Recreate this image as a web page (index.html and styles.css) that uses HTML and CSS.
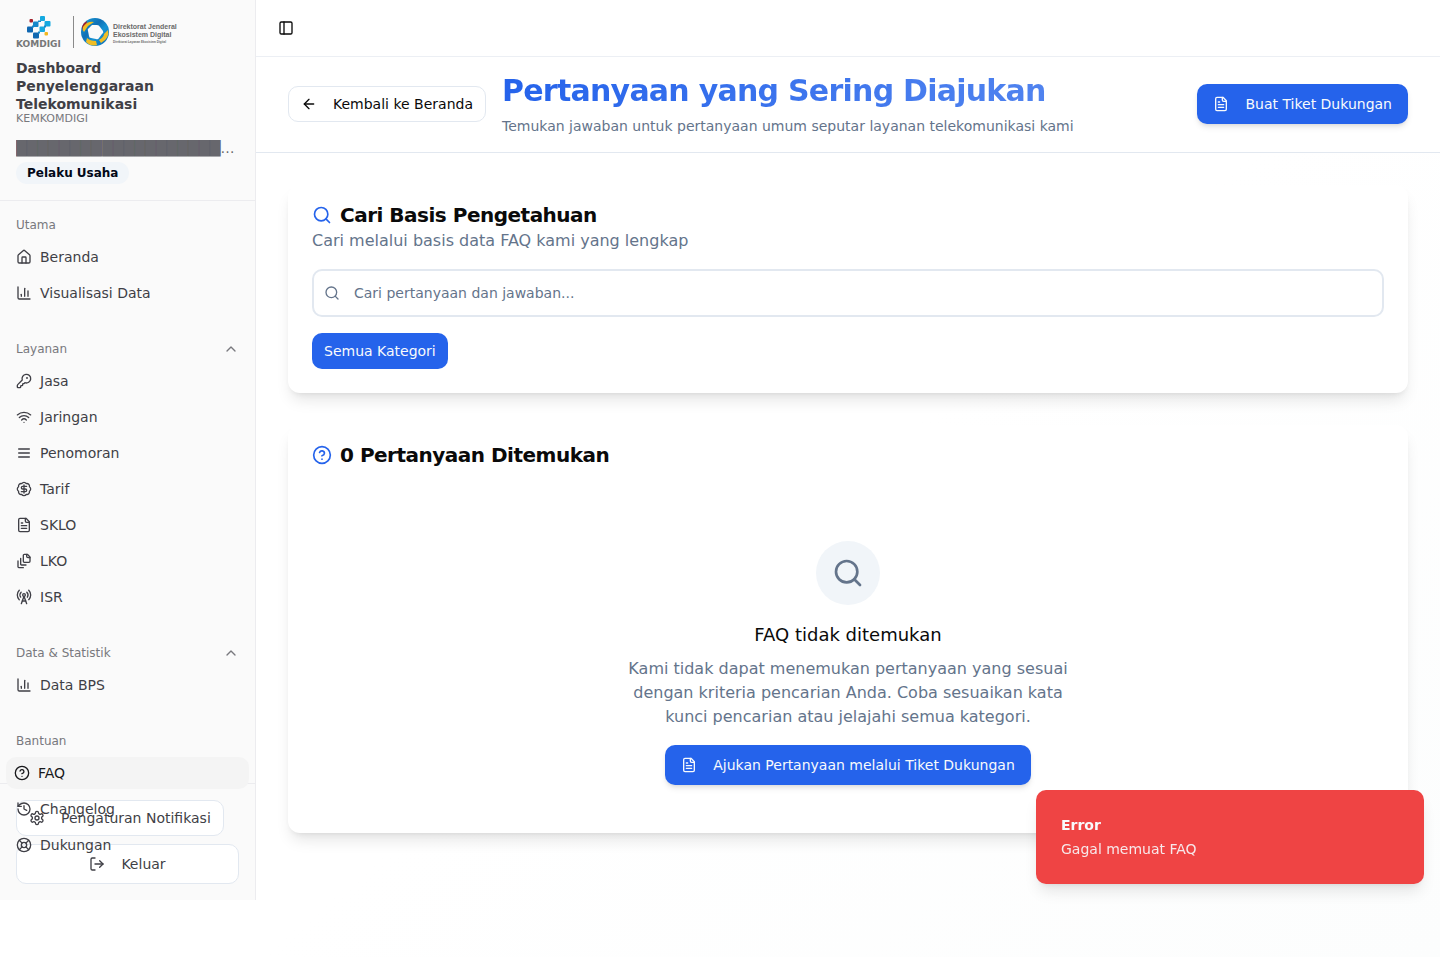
FILE: index.html
```html
<!DOCTYPE html>
<html lang="id">
<head>
  <meta charset="UTF-8" />
  <meta name="viewport" content="width=device-width, initial-scale=1.0"/>
  <title>Pertanyaan yang Sering Diajukan</title>
  <link rel="stylesheet" href="styles.css">
</head>
<body>
  <svg class="sprite" aria-hidden="true">
    <symbol id="search" viewBox="0 0 24 24"><circle cx="11" cy="11" r="8"/><path d="m21 21-4.3-4.3"/></symbol>
    <symbol id="chart" viewBox="0 0 24 24"><path d="M3 3v16a2 2 0 0 0 2 2h16"/><path d="M18 17V9"/><path d="M13 17V5"/><path d="M8 17v-3"/></symbol>
    <symbol id="file-text" viewBox="0 0 24 24"><path d="M15 2H6a2 2 0 0 0-2 2v16a2 2 0 0 0 2 2h12a2 2 0 0 0 2-2V7Z"/><path d="M14 2v4a2 2 0 0 0 2 2h4"/><path d="M10 9H8"/><path d="M16 13H8"/><path d="M16 17H8"/></symbol>
    <symbol id="help" viewBox="0 0 24 24"><circle cx="12" cy="12" r="10"/><path d="M9.09 9a3 3 0 0 1 5.83 1c0 2-3 3-3 3"/><path d="M12 17h.01"/></symbol>
    <symbol id="chevron-up" viewBox="0 0 24 24"><path d="m18 15-6-6-6 6"/></symbol>
  </svg>

  <div class="layout">
    <aside class="sidebar">
      <div class="sidebar-header">
        <svg class="logo" width="162" height="32" viewBox="0 0 162 32" role="img" aria-label="Komdigi, Direktorat Jenderal Ekosistem Digital">
          <rect x="13.500" y="3" width="3.500" height="3.500" rx="1" fill="#a31f2b"/>
          <rect x="24" y="0" width="5" height="5" rx="1" fill="#14a9e0"/>
          <rect x="17" y="5.500" width="5.500" height="5.500" rx="1" fill="#1687c9"/>
          <rect x="28.500" y="5" width="6" height="5.500" rx="1" fill="#14a9e0"/>
          <rect x="11" y="10.500" width="6" height="6" rx="1" fill="#0f67b1"/>
          <rect x="23.500" y="10.500" width="5.500" height="5.500" rx="1" fill="#14a9e0"/>
          <rect x="17" y="16.500" width="6" height="6" rx="1" fill="#0f67b1"/>
          <rect x="28.500" y="16" width="3.500" height="3.500" rx="1" fill="#f2b71f"/>
          <path d="M22 4.500h3v1.500h-3zM28 9.500h2v2h-2zM16 9.500h2v2h-2zM22 15.500h2v2h-2z" fill="#1687c9"/>
          <text x="0" y="31" class="logo-name">KOMDIGI</text>
          <path d="M57.500 0v32" stroke="#8a8a8a" fill="none"/>
          <linearGradient id="ring" x1="0" y1="0" x2="1" y2="1">
            <stop offset="0" stop-color="#1ba4de"/>
            <stop offset=".4" stop-color="#0f6fb5"/>
            <stop offset=".6" stop-color="#1593d3"/>
            <stop offset="1" stop-color="#0f67b1"/>
          </linearGradient>
          <circle cx="79" cy="16" r="14" fill="url(#ring)"/>
          <path d="M66 11q1-4 5-6l-1 5-3 5z" fill="#a31f2b"/>
          <path d="M67 11q4-6 11-5l-6 4-4 6q-2-2-1-5z" fill="#f0bd24"/>
          <path d="M92 14q2 8-7 13l-2-3q5-3 5-6z" fill="#f0bd24"/>
          <path d="M71 22q3 3 9 3l1 4q-6 2-11-3z" fill="#f0bd24"/>
          <path d="M76 9h5q2 0 3 2l3 4q1 2-1 3l-3 4q-1 2-3 1l-5-1q-2 0-2-2l-1-5q-1-2 1-3z" fill="#fafafa"/>
          <text x="97" y="13" class="logo-unit">Direktorat Jenderal</text>
          <text x="97" y="21" class="logo-unit">Ekosistem Digital</text>
          <text x="97" y="27" class="logo-small">Direktorat Layanan Ekosistem Digital</text>
        </svg>
        <div class="app-title">Dashboard Penyelenggaraan Telekomunikasi</div>
        <div class="app-org">KEMKOMDIGI</div>
        <div class="user-name">██████████████████████████</div>
        <span class="badge">Pelaku Usaha</span>
      </div>

      <nav class="sidebar-nav">
        <div class="group">
          <div class="group-label">Utama</div>
          <a href="#" class="item"><svg class="icon" viewBox="0 0 24 24"><path d="M15 21v-8a1 1 0 0 0-1-1h-4a1 1 0 0 0-1 1v8"/><path d="M3 10a2 2 0 0 1 .709-1.528l7-5.999a2 2 0 0 1 2.582 0l7 5.999A2 2 0 0 1 21 10v9a2 2 0 0 1-2 2H5a2 2 0 0 1-2-2z"/></svg>Beranda</a>
          <a href="#" class="item"><svg class="icon"><use href="#chart"/></svg>Visualisasi Data</a>
        </div>

        <div class="group">
          <button class="group-label">Layanan<svg class="icon"><use href="#chevron-up"/></svg></button>
          <a href="#" class="item"><svg class="icon" viewBox="0 0 24 24"><path d="M2.586 17.414A2 2 0 0 0 2 18.828V21a1 1 0 0 0 1 1h3a1 1 0 0 0 1-1v-1a1 1 0 0 1 1-1h1a1 1 0 0 0 1-1v-1a1 1 0 0 1 1-1h.172a2 2 0 0 0 1.414-.586l.814-.814a6.500 6.500 0 1 0-4-4z"/><circle cx="16.500" cy="7.500" r=".5" fill="currentColor"/></svg>Jasa</a>
          <a href="#" class="item"><svg class="icon" viewBox="0 0 24 24"><path d="M12 20h.01"/><path d="M2 8.820a15 15 0 0 1 20 0"/><path d="M5 12.859a10 10 0 0 1 14 0"/><path d="M8.500 16.429a5 5 0 0 1 7 0"/></svg>Jaringan</a>
          <a href="#" class="item"><svg class="icon" viewBox="0 0 24 24"><path d="M4 12h16"/><path d="M4 18h16"/><path d="M4 6h16"/></svg>Penomoran</a>
          <a href="#" class="item"><svg class="icon" viewBox="0 0 24 24"><path d="M3.850 8.620a4 4 0 0 1 4.780-4.770 4 4 0 0 1 6.740 0 4 4 0 0 1 4.780 4.780 4 4 0 0 1 0 6.740 4 4 0 0 1-4.770 4.780 4 4 0 0 1-6.750 0 4 4 0 0 1-4.780-4.770 4 4 0 0 1 0-6.760Z"/><path d="M16 8h-6a2 2 0 1 0 0 4h4a2 2 0 1 1 0 4H8"/><path d="M12 18V6"/></svg>Tarif</a>
          <a href="#" class="item"><svg class="icon"><use href="#file-text"/></svg>SKLO</a>
          <a href="#" class="item"><svg class="icon" viewBox="0 0 24 24"><path d="M21 7h-3a2 2 0 0 1-2-2V2"/><path d="M21 6v6.500c0 .8-.7 1.500-1.500 1.500h-7c-.8 0-1.500-.7-1.500-1.500v-9c0-.8.7-1.500 1.500-1.500H17Z"/><path d="M7 8v8.800c0 .3.2.6.4.8.2.2.5.4.8.4H15"/><path d="M3 12v8.800c0 .3.2.6.4.8.2.2.5.4.8.4H11"/></svg>LKO</a>
          <a href="#" class="item"><svg class="icon" viewBox="0 0 24 24"><path d="M4.900 16.100C1 12.200 1 5.800 4.900 1.900"/><path d="M7.800 4.700a6.140 6.140 0 0 0-.8 7.500"/><circle cx="12" cy="9" r="2"/><path d="M16.200 4.800c2 2 2.260 5.110.8 7.470"/><path d="M19.100 1.900a9.960 9.960 0 0 1 0 14.100"/><path d="M9.500 18h5"/><path d="m8 22 4-11 4 11"/></svg>ISR</a>
        </div>

        <div class="group">
          <button class="group-label">Data &amp; Statistik<svg class="icon"><use href="#chevron-up"/></svg></button>
          <a href="#" class="item"><svg class="icon"><use href="#chart"/></svg>Data BPS</a>
        </div>

        <div class="group">
          <div class="group-label">Bantuan</div>
          <a href="#" class="item active"><svg class="icon"><use href="#help"/></svg>FAQ</a>
          <a href="#" class="item"><svg class="icon" viewBox="0 0 24 24"><path d="M3 12a9 9 0 1 0 9-9 9.750 9.750 0 0 0-6.740 2.740L3 8"/><path d="M3 3v5h5"/><path d="M12 7v5l4 2"/></svg>Changelog</a>
          <a href="#" class="item"><svg class="icon" viewBox="0 0 24 24"><circle cx="12" cy="12" r="10"/><path d="m4.930 4.930 4.240 4.240"/><path d="m14.830 9.170 4.240-4.240"/><path d="m14.830 14.830 4.240 4.240"/><path d="m9.170 14.830-4.240 4.240"/><circle cx="12" cy="12" r="4"/></svg>Dukungan</a>
        </div>
      </nav>

      <div class="sidebar-footer">
        <button class="btn btn-outline btn-sm"><svg class="icon" viewBox="0 0 24 24"><path d="M12.220 2h-.44a2 2 0 0 0-2 2v.18a2 2 0 0 1-1 1.730l-.43.25a2 2 0 0 1-2 0l-.15-.08a2 2 0 0 0-2.730.73l-.22.38a2 2 0 0 0 .73 2.730l.15.1a2 2 0 0 1 1 1.720v.51a2 2 0 0 1-1 1.740l-.15.09a2 2 0 0 0-.73 2.730l.22.38a2 2 0 0 0 2.730.73l.15-.08a2 2 0 0 1 2 0l.43.25a2 2 0 0 1 1 1.730V20a2 2 0 0 0 2 2h.44a2 2 0 0 0 2-2v-.18a2 2 0 0 1 1-1.730l.43-.25a2 2 0 0 1 2 0l.15.08a2 2 0 0 0 2.730-.73l.22-.39a2 2 0 0 0-.73-2.730l-.15-.08a2 2 0 0 1-1-1.740v-.5a2 2 0 0 1 1-1.740l.15-.09a2 2 0 0 0 .73-2.730l-.22-.38a2 2 0 0 0-2.730-.73l-.15.08a2 2 0 0 1-2 0l-.43-.25a2 2 0 0 1-1-1.730V4a2 2 0 0 0-2-2z"/><circle cx="12" cy="12" r="3"/></svg>Pengaturan Notifikasi</button>
        <button class="btn btn-outline btn-full"><svg class="icon" viewBox="0 0 24 24"><path d="M9 21H5a2 2 0 0 1-2-2V5a2 2 0 0 1 2-2h4"/><path d="m16 17 5-5-5-5"/><path d="M21 12H9"/></svg>Keluar</button>
      </div>
    </aside>

    <main class="main">
      <div class="topbar">
        <button class="toggle" aria-label="Toggle Sidebar"><svg class="icon" viewBox="0 0 24 24"><rect width="18" height="18" x="3" y="3" rx="2"/><path d="M9 3v18"/></svg></button>
      </div>

      <header class="page-header">
        <button class="btn btn-outline btn-sm"><svg class="icon" viewBox="0 0 24 24"><path d="m12 19-7-7 7-7"/><path d="M19 12H5"/></svg>Kembali ke Beranda</button>
        <div class="page-heading">
          <h1>Pertanyaan yang Sering Diajukan</h1>
          <p>Temukan jawaban untuk pertanyaan umum seputar layanan telekomunikasi kami</p>
        </div>
        <button class="btn btn-primary"><svg class="icon"><use href="#file-text"/></svg>Buat Tiket Dukungan</button>
      </header>

      <div class="content">
        <section class="card">
          <div class="card-header">
            <h2><svg class="icon icon-md"><use href="#search"/></svg>Cari Basis Pengetahuan</h2>
            <p>Cari melalui basis data FAQ kami yang lengkap</p>
          </div>
          <div class="card-body">
            <label class="search-box">
              <svg class="icon"><use href="#search"/></svg>
              <input type="text" placeholder="Cari pertanyaan dan jawaban..." aria-label="Cari pertanyaan dan jawaban">
            </label>
            <button class="btn btn-category">Semua Kategori</button>
          </div>
        </section>

        <section class="card">
          <div class="card-header">
            <h2><svg class="icon icon-md"><use href="#help"/></svg>0 Pertanyaan Ditemukan</h2>
          </div>
          <div class="empty">
            <div class="empty-icon"><svg class="icon icon-lg"><use href="#search"/></svg></div>
            <h3>FAQ tidak ditemukan</h3>
            <p>Kami tidak dapat menemukan pertanyaan yang sesuai dengan kriteria pencarian Anda. Coba sesuaikan kata kunci pencarian atau jelajahi semua kategori.</p>
            <button class="btn btn-primary"><svg class="icon"><use href="#file-text"/></svg>Ajukan Pertanyaan melalui Tiket Dukungan</button>
          </div>
        </section>
      </div>
    </main>
  </div>

  <div class="toast" role="alert">
    <div class="toast-title">Error</div>
    <div class="toast-text">Gagal memuat FAQ</div>
  </div>
</body>
</html>
```
FILE: styles.css
```css
* {
  box-sizing: border-box;
}
body {
  margin: 0;
  font-family: "DejaVu Sans", sans-serif;
  font-size: 14px;
  line-height: 20px;
  color: #0a0a0a;
  background: #fff;
}
h1, h2, h3, p {
  margin: 0;
}
button, input {
  font: inherit;
  color: inherit;
}
.sprite {
  display: none;
}
.icon {
  width: 16px;
  height: 16px;
  flex-shrink: 0;
  fill: none;
  stroke: currentColor;
  stroke-width: 2;
  stroke-linecap: round;
  stroke-linejoin: round;
}
.icon-md {
  width: 20px;
  height: 20px;
}
.icon-lg {
  width: 32px;
  height: 32px;
}
.layout {
  display: flex;
  align-items: flex-start;
}

/* Sidebar */
.sidebar {
  width: 256px;
  flex-shrink: 0;
  background: #fafafa;
  border-right: 1px solid #ececef;
  color: #3f3f46;
}
.sidebar-header {
  padding: 16px;
  border-bottom: 1px solid #ececef;
}
.logo {
  display: block;
  margin-bottom: 11px;
  overflow: visible;
}
.logo-name {
  font: bold 9px "DejaVu Sans", sans-serif;
  fill: #777;
}
.logo-unit {
  font: bold 7px "Liberation Sans", sans-serif;
  fill: #6a6a6a;
}
.logo-small {
  font: bold 3px "Liberation Sans", sans-serif;
  fill: #6a6a6a;
}
.app-title {
  font-weight: bold;
  line-height: 18px;
}
.app-org {
  font-size: 11px;
  line-height: 12px;
  color: #78787d;
}
.user-name {
  margin: 13px 0 4px;
  overflow: hidden;
  white-space: nowrap;
  text-overflow: ellipsis;
  color: rgba(63, 63, 70, 0.8);
}
.badge {
  display: block;
  width: fit-content;
  padding: 3px 11px;
  border-radius: 11px;
  background: #f1f5f9;
  color: #020817;
  font-size: 12px;
  line-height: 16px;
  font-weight: bold;
}
.sidebar-nav {
  position: relative;
  z-index: 1;
  display: flex;
  flex-direction: column;
  gap: 8px;
}
.group {
  display: flex;
  flex-direction: column;
  padding: 8px;
}
.group-label {
  display: flex;
  align-items: center;
  justify-content: space-between;
  height: 32px;
  padding: 0 8px;
  border: none;
  background: none;
  font-size: 12px;
  color: #78787d;
}
.item {
  display: flex;
  align-items: center;
  gap: 8px;
  height: 32px;
  padding: 0 8px;
  border-radius: 10px;
  color: #3f3f46;
  text-decoration: none;
}
.item + .item {
  margin-top: 4px;
}
.item.active {
  margin: 0 -2px;
  background: #f4f4f4;
  color: #18181b;
}
.sidebar-footer {
  display: flex;
  flex-direction: column;
  align-items: flex-start;
  gap: 8px;
  margin-top: -86px;
  padding: 16px;
  border-top: 1px solid #ececef;
}

/* Buttons */
.btn {
  display: flex;
  align-items: center;
  justify-content: center;
  gap: 16px;
  height: 40px;
  padding: 0 16px;
  border: none;
  border-radius: 10px;
  white-space: nowrap;
  cursor: pointer;
}
.btn-outline {
  border: 1px solid #e2e8f0;
  background: #fff;
}
.btn-sm {
  height: 36px;
  padding: 0 12px;
}
.btn-full {
  width: 100%;
}
.btn-primary {
  background: #2563eb;
  color: #f8fafc;
  box-shadow: 0 4px 6px -1px rgba(0, 0, 0, 0.1), 0 2px 4px -2px rgba(0, 0, 0, 0.1);
}
.btn-category {
  height: 36px;
  padding: 0 12px;
  background: #2563eb;
  color: #f8fafc;
}

/* Main */
.main {
  flex: 1;
  min-width: 0;
  min-height: 100vh;
  background: linear-gradient(to bottom right, #fff, #fff 50%, #fcfdfd);
}
.topbar {
  display: flex;
  align-items: center;
  height: 56px;
  padding: 0 16px;
  background: #fff;
}
.toggle {
  display: flex;
  padding: 6px;
  border: none;
  background: none;
}
.page-header {
  display: flex;
  align-items: center;
  gap: 16px;
  padding: 15px 32px 16px;
  border-top: 1px solid #eceff4;
  border-bottom: 1px solid #e2e8f0;
  background: #fff;
}
.page-heading {
  flex: 1;
}
.page-heading h1 {
  width: fit-content;
  margin-bottom: 6px;
  font-size: 30px;
  line-height: 38px;
  letter-spacing: -0.025em;
  background: linear-gradient(to right, #2563eb, #5083ef);
  background-clip: text;
  -webkit-background-clip: text;
  color: transparent;
}
.page-heading p {
  color: #64748b;
}
.content {
  display: flex;
  flex-direction: column;
  gap: 32px;
  padding: 32px;
}
.card {
  border-radius: 12px;
  background: #fff;
  box-shadow: 0 10px 15px -3px rgba(0, 0, 0, 0.1), 0 4px 6px -4px rgba(0, 0, 0, 0.1);
}
.card-header {
  padding: 16px 24px;
}
.card-header h2 {
  display: flex;
  align-items: center;
  gap: 8px;
  font-size: 20px;
  line-height: 28px;
  letter-spacing: -0.025em;
}
.card-header .icon {
  color: #2563eb;
}
.card-header p {
  font-size: 16px;
  line-height: 24px;
  color: #64748b;
}
.card-body {
  display: flex;
  flex-direction: column;
  align-items: flex-start;
  gap: 16px;
  padding: 0 24px 24px;
}
.search-box {
  display: flex;
  align-items: center;
  gap: 14px;
  width: 100%;
  height: 48px;
  padding: 0 10px;
  border: 2px solid #e2e8f0;
  border-radius: 10px;
  color: #64748b;
}
.search-box input {
  flex: 1;
  padding: 0;
  border: none;
  outline: none;
  background: none;
}
.search-box input::placeholder {
  color: #64748b;
}
.empty {
  display: flex;
  flex-direction: column;
  align-items: center;
  padding: 56px 24px 48px;
  text-align: center;
}
.empty-icon {
  padding: 16px;
  border-radius: 50%;
  background: #f1f5f9;
  color: #64748b;
}
.empty-icon .icon {
  display: block;
}
.empty h3 {
  margin: 16px 0 8px;
  font-size: 18px;
  line-height: 28px;
  font-weight: normal;
}
.empty p {
  max-width: 448px;
  margin-bottom: 16px;
  font-size: 16px;
  line-height: 24px;
  color: #64748b;
}

.toast {
  position: fixed;
  right: 16px;
  bottom: 73px;
  z-index: 10;
  width: 388px;
  padding: 25px;
  border-radius: 10px;
  background: #ef4444;
  color: #f8fafc;
  box-shadow: 0 10px 15px -3px rgba(0, 0, 0, 0.1), 0 4px 6px -4px rgba(0, 0, 0, 0.1);
}
.toast-title {
  margin-bottom: 4px;
  font-weight: bold;
}
.toast-text {
  opacity: 0.9;
}
```
